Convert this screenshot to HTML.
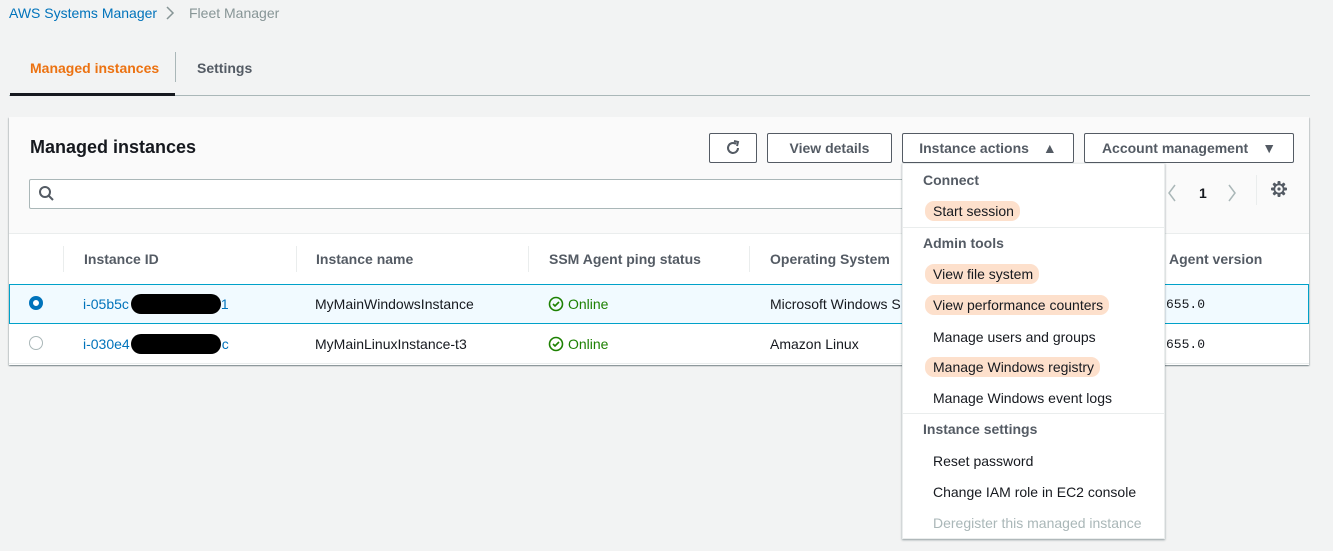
<!DOCTYPE html>
<html><head><meta charset="utf-8"><style>
*{box-sizing:border-box;margin:0;padding:0}
body{width:1333px;height:551px;background:#f2f3f3;font-family:"Liberation Sans",sans-serif;font-size:14px;color:#16191f;position:relative;overflow:hidden}
.a{position:absolute;white-space:nowrap}
.btn{position:absolute;top:133px;height:30px;border:1px solid #545b64;background:#fff;border-radius:2px;font-weight:bold;color:#545b64;font-size:14px;display:flex;align-items:center;justify-content:center}
.hl{background:#fde0cc;border-radius:9px;padding:2px 6px 2px 8px;margin-left:-8px}
.tri{font-size:14px;margin-left:14px}
</style></head><body>
<div class="a" style="left:9px;top:5px;color:#0073bb">AWS Systems Manager</div>
<svg class="a" style="left:164px;top:5px" width="12" height="16"><path d="M3 2l6 6-6 6" stroke="#879596" stroke-width="1.5" fill="none"/></svg>
<div class="a" style="left:189px;top:5px;color:#879596">Fleet Manager</div>
<div class="a" style="left:30px;top:60px;color:#ec7211;font-weight:bold">Managed instances</div>
<div class="a" style="left:175px;top:52px;width:1px;height:30px;background:#aab7b8"></div>
<div class="a" style="left:197px;top:60px;color:#545b64;font-weight:bold">Settings</div>
<div class="a" style="left:9px;top:95px;width:1301px;height:1px;background:#aab7b8"></div>
<div class="a" style="left:10px;top:93px;width:165px;height:3px;background:#16191f"></div>

<div class="a" style="left:9px;top:117px;width:1300px;height:248px;background:#fff;box-shadow:0 1px 1px rgba(0,28,36,.3),1px 1px 1px rgba(0,28,36,.15),-1px 1px 1px rgba(0,28,36,.15)">
<div class="a" style="left:0;top:0;width:1300px;height:117px;background:#fafafa;border-bottom:1px solid #eaeded"></div>
</div>
<div class="a" style="left:30px;top:137px;font-size:18px;font-weight:bold">Managed instances</div>
<div class="btn" style="left:709px;width:48px"><svg width="18" height="18" viewBox="0 0 18 18"><path d="M14 9a5 5 0 1 1-2-4" stroke="#545b64" stroke-width="2" fill="none"/><path d="M10 2l4 1-1 4" stroke="#545b64" stroke-width="2" fill="none"/></svg></div>
<div class="btn" style="left:767px;width:125px">View details</div>
<div class="btn" style="left:902px;width:172px">Instance actions<span class="tri">▲</span></div>
<div class="btn" style="left:1084px;width:210px">Account management<span class="tri">▼</span></div>
<div class="a" style="left:29px;top:179px;width:880px;height:30px;background:#fff;border:1px solid #aab7b8;border-radius:2px"></div>
<svg class="a" style="left:38px;top:185px" width="18" height="18"><circle cx="7" cy="7" r="5" stroke="#545b64" stroke-width="2" fill="none"/><path d="M11 11l4 4" stroke="#545b64" stroke-width="2"/></svg>
<svg class="a" style="left:1166px;top:183px" width="12" height="20"><path d="M9 2l-6 8 6 8" stroke="#aab7b8" stroke-width="1.5" fill="none"/></svg>
<div class="a" style="left:1199px;top:185px;font-weight:bold">1</div>
<svg class="a" style="left:1226px;top:183px" width="12" height="20"><path d="M3 2l6 8-6 8" stroke="#aab7b8" stroke-width="1.5" fill="none"/></svg>
<div class="a" style="left:1256px;top:175px;width:1px;height:30px;background:#eaeded"></div>
<svg class="a" style="left:1270px;top:180px" width="18" height="18" viewBox="0 0 18 18">
<g fill="#545b64"><rect x="7.5" y="1" width="3" height="16" rx="1"/><rect x="7.5" y="1" width="3" height="16" rx="1" transform="rotate(45 9 9)"/><rect x="7.5" y="1" width="3" height="16" rx="1" transform="rotate(90 9 9)"/><rect x="7.5" y="1" width="3" height="16" rx="1" transform="rotate(135 9 9)"/></g>
<circle cx="9" cy="9" r="5.5" fill="#545b64"/><circle cx="9" cy="9" r="3.8" fill="#fafafa"/><circle cx="9" cy="9" r="1.6" fill="#545b64"/></svg>

<div class="a" style="left:63px;top:246px;width:1px;height:26px;background:#eaeded"></div>
<div class="a" style="left:296px;top:246px;width:1px;height:26px;background:#eaeded"></div>
<div class="a" style="left:528px;top:246px;width:1px;height:26px;background:#eaeded"></div>
<div class="a" style="left:749px;top:246px;width:1px;height:26px;background:#eaeded"></div>
<div class="a" style="left:84px;top:251px;font-weight:bold;color:#545b64">Instance ID</div>
<div class="a" style="left:316px;top:251px;font-weight:bold;color:#545b64">Instance name</div>
<div class="a" style="left:549px;top:251px;font-weight:bold;color:#545b64">SSM Agent ping status</div>
<div class="a" style="left:770px;top:251px;font-weight:bold;color:#545b64">Operating System</div>
<div class="a" style="left:1169px;top:251px;font-weight:bold;color:#545b64">Agent version</div>
<div class="a" style="left:9px;top:284px;width:1300px;height:40px;background:#f1faff;border:1px solid #00a1c9"></div>
<div class="a" style="left:9px;top:363px;width:1300px;height:1px;background:#eaeded"></div>
<div class="a" style="left:29px;top:296px;width:14px;height:14px;border-radius:50%;border:4px solid #0073bb;background:#fff"></div>
<div class="a" style="left:29px;top:336px;width:14px;height:14px;border-radius:50%;border:1px solid #aab7b8;background:#fff"></div>
<div class="a" style="left:83px;top:296px;color:#0073bb">i-05b5c<span style="display:inline-block;width:92px"></span>1</div>
<div class="a" style="left:131px;top:294px;width:90px;height:20px;background:#000;border-radius:10px"></div>
<div class="a" style="left:83px;top:336px;color:#0073bb">i-030e4<span style="display:inline-block;width:92px"></span>c</div>
<div class="a" style="left:131px;top:334px;width:90px;height:20px;background:#000;border-radius:10px"></div>
<div class="a" style="left:315px;top:296px">MyMainWindowsInstance</div>
<div class="a" style="left:315px;top:336px">MyMainLinuxInstance-t3</div>
<svg class="a" style="left:548px;top:296px" width="16" height="16"><circle cx="8" cy="8" r="6.5" stroke="#1d8102" stroke-width="1.6" fill="none"/><path d="M5 8l2 2 4-4" stroke="#1d8102" stroke-width="1.6" fill="none"/></svg>
<div class="a" style="left:568px;top:296px;color:#1d8102">Online</div>
<svg class="a" style="left:548px;top:336px" width="16" height="16"><circle cx="8" cy="8" r="6.5" stroke="#1d8102" stroke-width="1.6" fill="none"/><path d="M5 8l2 2 4-4" stroke="#1d8102" stroke-width="1.6" fill="none"/></svg>
<div class="a" style="left:568px;top:336px;color:#1d8102">Online</div>
<div class="a" style="left:770px;top:296px">Microsoft Windows S</div>
<div class="a" style="left:770px;top:336px">Amazon Linux</div>
<div class="a" style="left:1166px;top:297px;font-family:'Liberation Mono',monospace;font-size:13px">655.0</div>
<div class="a" style="left:1166px;top:337px;font-family:'Liberation Mono',monospace;font-size:13px">655.0</div>

<div class="a" style="left:902px;top:163px;width:263px;height:376px;background:#fff;border:1px solid #eaeded;box-shadow:0 1px 2px rgba(0,28,36,.4)">
<div class="a" style="left:0;top:63px;width:261px;height:1px;background:#eaeded"></div>
<div class="a" style="left:0;top:249px;width:261px;height:1px;background:#eaeded"></div>
<div class="a" style="left:20px;top:8px;font-weight:bold;color:#545b64">Connect</div>
<div class="a" style="left:30px;top:39px"><span class="hl">Start session</span></div>
<div class="a" style="left:20px;top:71px;font-weight:bold;color:#545b64">Admin tools</div>
<div class="a" style="left:30px;top:102px"><span class="hl">View file system</span></div>
<div class="a" style="left:30px;top:133px"><span class="hl">View performance counters</span></div>
<div class="a" style="left:30px;top:165px">Manage users and groups</div>
<div class="a" style="left:30px;top:195px"><span class="hl">Manage Windows registry</span></div>
<div class="a" style="left:30px;top:226px">Manage Windows event logs</div>
<div class="a" style="left:20px;top:257px;font-weight:bold;color:#545b64">Instance settings</div>
<div class="a" style="left:30px;top:289px">Reset password</div>
<div class="a" style="left:30px;top:320px">Change IAM role in EC2 console</div>
<div class="a" style="left:30px;top:351px;color:#aab7b8">Deregister this managed instance</div>
</div>
</body></html>
